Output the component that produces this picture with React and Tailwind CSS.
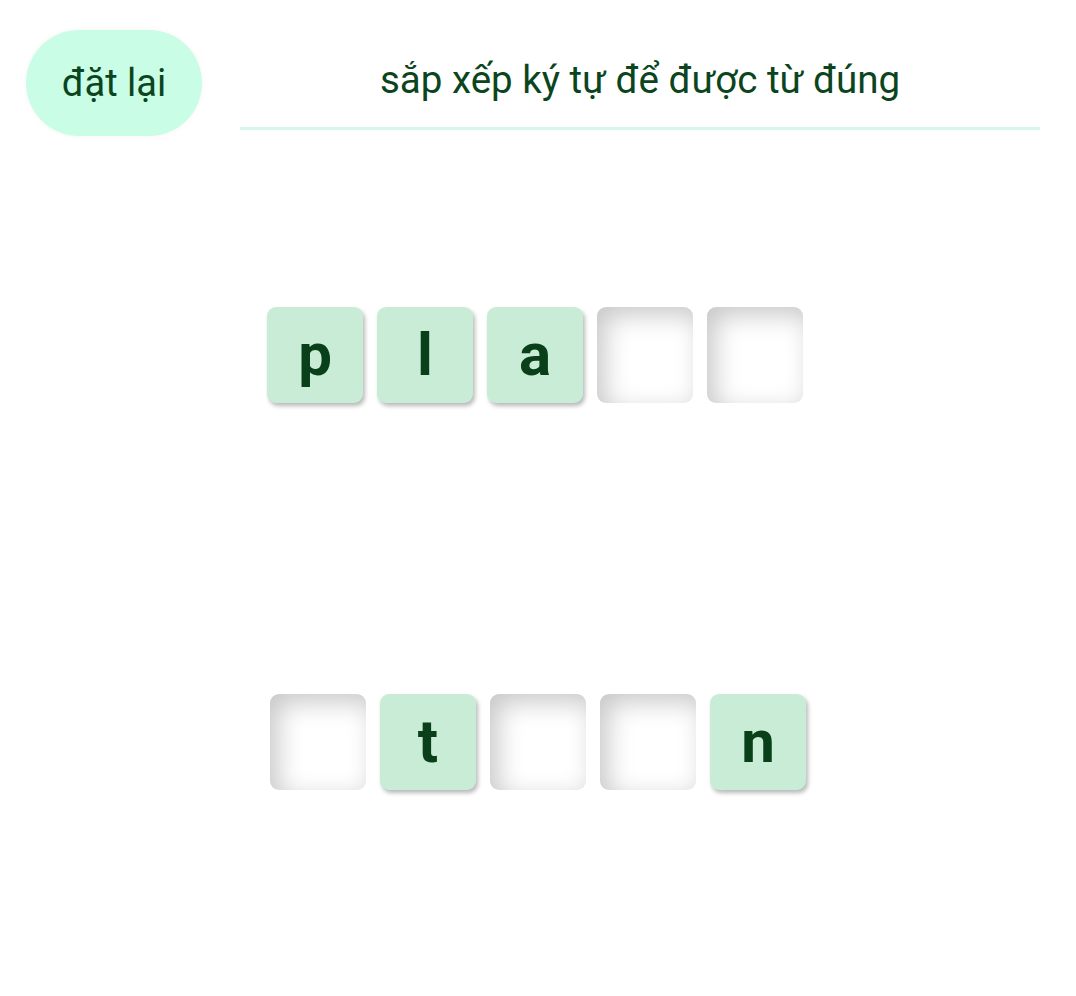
import React from "react";

function Tile({ ch }) {
  if (ch) {
    return (
      <div className="w-[96px] h-[96px] rounded-[9px] bg-[#c9ecd7] shadow-[2px_3px_4px_rgba(0,0,0,0.28)] flex items-center justify-center">
        <span className="text-[60px] font-bold text-[#0a4019] leading-none">{ch}</span>
      </div>
    );
  }
  return (
    <div className="w-[96px] h-[96px] rounded-[9px] bg-white shadow-[inset_8px_8px_26px_rgba(0,0,0,0.22)]" />
  );
}

export default function App() {
  const row1 = ["p", "l", "a", "", ""];
  const row2 = ["", "t", "", "", "n"];
  return (
    <div className="w-[1076px] h-[996px] bg-white" style={{ fontFamily: "Roboto, 'Noto Sans', sans-serif" }}>
      <div className="flex items-start pt-[30px] pl-[26px] pr-[36px]">
        <button className="w-[176px] h-[106px] rounded-full bg-[#c9fde6] shadow-[0_0_6px_rgba(0,0,0,0.04)] text-[38px] text-[#0b4520] flex items-center justify-center">
          đặt lại
        </button>
        <div className="flex-1 ml-[38px] h-[100px] flex items-center justify-center border-b-[3px] border-[#d6f7ec]">
          <span className="text-[38.5px] text-[#0b4520] pt-[2px]">sắp xếp ký tự để được từ đúng</span>
        </div>
      </div>
      <div className="flex justify-center gap-[14px] mt-[171px] pr-[6px]">
        {row1.map((c, i) => (
          <Tile key={i} ch={c} />
        ))}
      </div>
      <div className="flex justify-center gap-[14px] mt-[291px]">
        {row2.map((c, i) => (
          <Tile key={i} ch={c} />
        ))}
      </div>
    </div>
  );
}
